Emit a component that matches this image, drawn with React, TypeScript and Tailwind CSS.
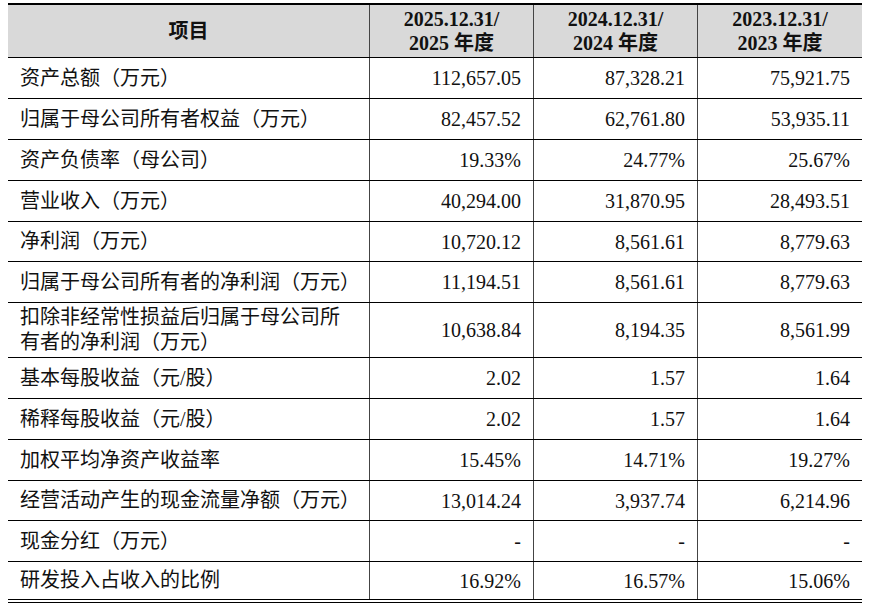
const rows: { label: string; values: string[]; h: string }[] = [
  { label: "资产总额（万元）", values: ["112,657.05", "87,328.21", "75,921.75"], h: "h-[41px]" },
  { label: "归属于母公司所有者权益（万元）", values: ["82,457.52", "62,761.80", "53,935.11"], h: "h-[41px]" },
  { label: "资产负债率（母公司）", values: ["19.33%", "24.77%", "25.67%"], h: "h-[41px]" },
  { label: "营业收入（万元）", values: ["40,294.00", "31,870.95", "28,493.51"], h: "h-[41px]" },
  { label: "净利润（万元）", values: ["10,720.12", "8,561.61", "8,779.63"], h: "h-[40px]" },
  { label: "归属于母公司所有者的净利润（万元）", values: ["11,194.51", "8,561.61", "8,779.63"], h: "h-[41px]" },
  { label: "扣除非经常性损益后归属于母公司所有者的净利润（万元）", values: ["10,638.84", "8,194.35", "8,561.99"], h: "h-[55px]" },
  { label: "基本每股收益（元/股）", values: ["2.02", "1.57", "1.64"], h: "h-[41px]" },
  { label: "稀释每股收益（元/股）", values: ["2.02", "1.57", "1.64"], h: "h-[41px]" },
  { label: "加权平均净资产收益率", values: ["15.45%", "14.71%", "19.27%"], h: "h-[41px]" },
  { label: "经营活动产生的现金流量净额（万元）", values: ["13,014.24", "3,937.74", "6,214.96"], h: "h-[40px]" },
  { label: "现金分红（万元）", values: ["-", "-", "-"], h: "h-[41px]" },
  { label: "研发投入占收入的比例", values: ["16.92%", "16.57%", "15.06%"], h: "h-[41px]" },
];

const headers = [
  ["2025.12.31/", "2025 年度"],
  ["2024.12.31/", "2024 年度"],
  ["2023.12.31/", "2023 年度"],
];

const grid = "grid grid-cols-[361px_164px_164px_165px]";

export default function App() {
  return (
    <div
      className="bg-white w-[872px] h-[611px] pt-[3px] pl-[8px] text-[20px] text-[#111]"
      style={{ fontFamily: '"Liberation Serif", "Noto Sans CJK SC", serif' }}>
      <div className="w-[854px]">
        {/* header */}
        <div className={`${grid} h-[55px] border-t-2 border-b border-black bg-[#d9d9d9]`}>
          <div className="flex items-center justify-center font-bold">项目</div>
          {headers.map((h) => (
            <div
              key={h[0]}
              className="flex flex-col items-center justify-center border-l border-[#444] font-bold leading-[24px]">
              <span>{h[0]}</span>
              <span>{h[1]}</span>
            </div>
          ))}
        </div>

        {rows.map((r, i) => {
          const last = i === rows.length - 1;
          return (
            <div
              key={r.label}
              className={`${grid} ${r.h} ${last ? "border-b-4 border-double" : "border-b"} border-black`}>
              <div className="flex items-center pl-[12px] pr-[10px] leading-[25px]">
                {r.label}
              </div>
              {r.values.map((v, j) => (
                <div
                  key={j}
                  className="flex items-center justify-end border-l border-[#444] pr-[12px]">
                  {v}
                </div>
              ))}
            </div>
          );
        })}
      </div>
    </div>
  );
}
